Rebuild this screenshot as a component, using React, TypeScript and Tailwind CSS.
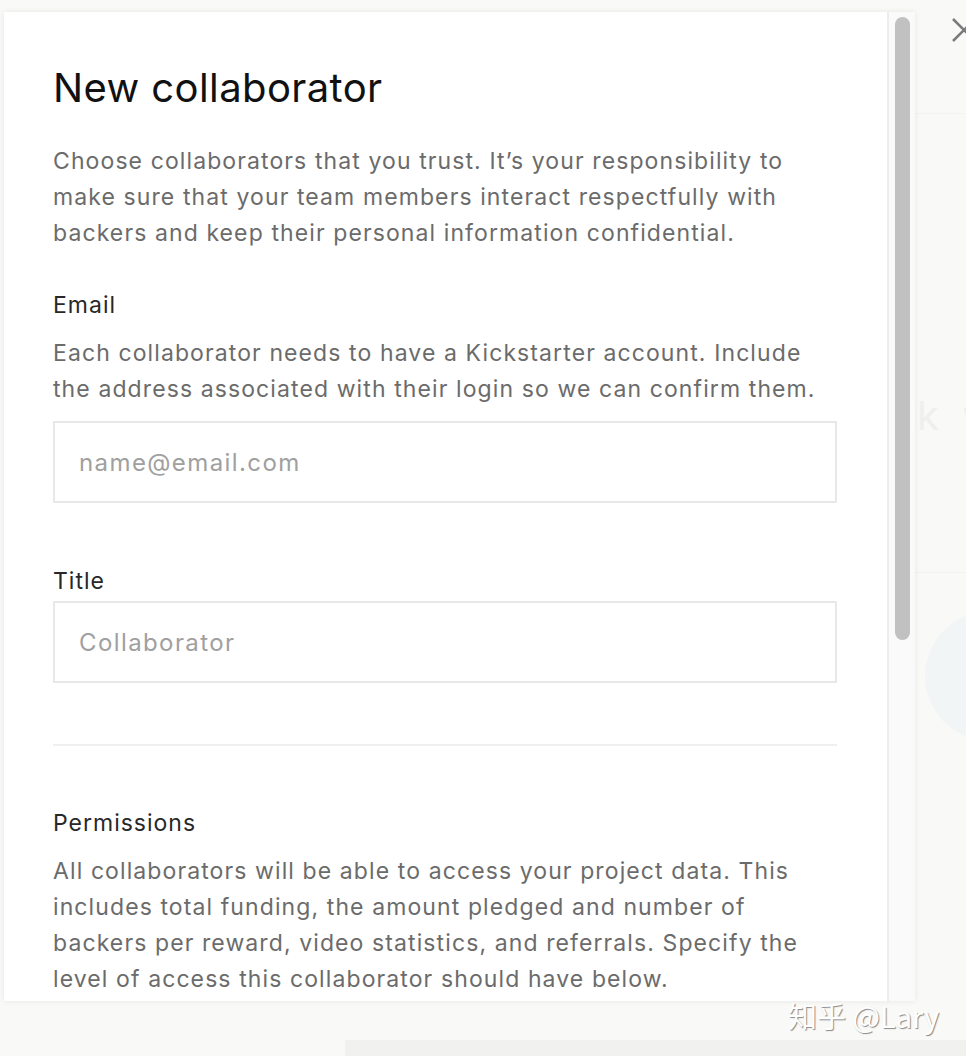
import React from "react";

const font = "font-['Inter','Noto_Sans',sans-serif]";
const body = "text-[23px] leading-[36px] tracking-[1.1px] text-[#6b6b6b]";

function Field(props: { label: string; hint?: string; placeholder: string; gap: string }) {
  return (
    <div className="flex flex-col">
      <label className="text-[23px] leading-[36px] tracking-[1px] text-[#282828]">{props.label}</label>
      {props.hint && <p className={`mt-[12px] max-w-[776px] ${body}`}>{props.hint}</p>}
      <input
        className={`${props.gap} h-[82px] w-full border-2 border-[#e8e8e8] px-[24px] text-[24px] tracking-[1.4px] text-[#282828] outline-none placeholder:text-[#a0a0a0]`}
        placeholder={props.placeholder}
      />
    </div>
  );
}

export default function App() {
  return (
    <div className={`${font} relative h-[1056px] w-[966px] overflow-hidden bg-[#f9f9f8]`}>
      {/* page behind the modal */}
      <div className="flex h-full flex-col pl-[915px]">
        <div className="mt-[113px] h-px w-full bg-[#f3f3f2]" />
        <div className="mt-[276px] whitespace-nowrap pl-[2px] text-[40px] leading-[52px] tracking-[6px] text-[#efefee]">
          k work
        </div>
        <div className="mt-[130px] h-px w-full bg-[#f3f3f2]" />
        <div className="ml-[10px] mt-[38px] h-[130px] w-[130px] rounded-full bg-[#f2f5f6]" />
      </div>
      <div className="absolute bottom-0 left-[345px] right-0 h-[16px] bg-[#f1f1f0]" />

      {/* close */}
      <svg className="absolute left-[952px] top-[18px]" width="24" height="24" viewBox="0 0 24 24">
        <path d="M1 1 L23 23 M23 1 L1 23" stroke="#7b7b7b" strokeWidth="2.6" fill="none" />
      </svg>

      {/* modal */}
      <div className="absolute left-[4px] top-[12px] flex h-[989px] w-[911px] bg-white shadow-[0_0_6px_rgba(0,0,0,0.08)]">
        <div className="flex-1 overflow-hidden pl-[49px] pr-[50px] pt-[52px]">
          <h1 className="text-[40px] font-normal leading-[48px] tracking-[0.4px] text-[#111]">
            New collaborator
          </h1>
          <p className={`mt-[31px] max-w-[776px] ${body}`}>
            Choose collaborators that you trust. It’s your responsibility to make sure that your team
            members interact respectfully with backers and keep their personal information
            confidential.
          </p>
          <div className="mt-[36px]">
            <Field
              label="Email"
              hint="Each collaborator needs to have a Kickstarter account. Include the address associated with their login so we can confirm them."
              placeholder="name@email.com"
              gap="mt-[14px]"
            />
          </div>
          <div className="mt-[60px]">
            <Field label="Title" placeholder="Collaborator" gap="mt-[2px]" />
          </div>
          <div className="mt-[61px] h-[2px] w-full bg-[#efefef]" />
          <h2 className="mt-[59px] text-[23px] leading-[36px] tracking-[1px] text-[#282828]">Permissions</h2>
          <p className={`mt-[12px] max-w-[776px] ${body}`}>
            All collaborators will be able to access your project data. This includes total
            funding, the amount pledged and number of backers per reward, video statistics, and
            referrals. Specify the level of access this collaborator should have below.
          </p>
        </div>
        {/* scrollbar */}
        <div className="flex w-[28px] justify-center border-l-2 border-[#ededed] bg-[#fafafa] pt-[5px]">
          <div className="h-[623px] w-[15px] rounded-full bg-[#c1c1c1]" />
        </div>
      </div>

      {/* watermark */}
      <div className="absolute left-[788px] top-[996px] whitespace-nowrap font-['Noto_Sans_CJK_SC',sans-serif] text-[29px] leading-[38px] text-white [text-shadow:1px_1px_1px_rgba(0,0,0,0.45)]">
        知乎 @Lary
      </div>
    </div>
  );
}
